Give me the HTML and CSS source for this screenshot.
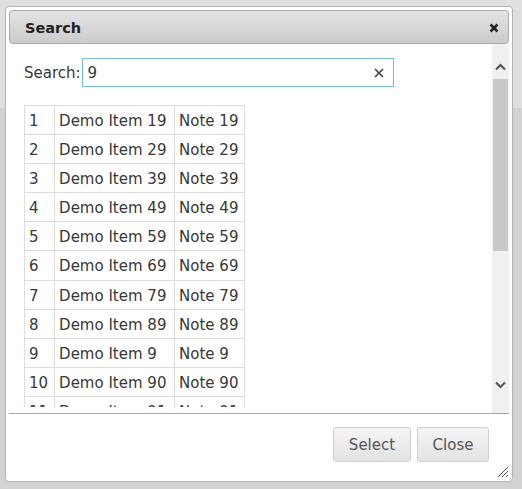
FILE: index.html
```html
<!DOCTYPE html>
<html>
<head>
<meta charset="utf-8">
<link rel="stylesheet" href="styles.css">
</head>
<body>
<div class="dialog">
  <div class="titlebar">
    <span class="title">Search</span>
    <svg class="title-close" width="10" height="10" viewBox="0 0 10 10"><path d="M1.5 1.5 L8.5 8.5 M8.5 1.5 L1.5 8.5" stroke="#222" stroke-width="2.6" stroke-linecap="butt"/></svg>
  </div>
  <div class="body">
    <div class="content">
      <div class="search-row">
        <label class="search-label">Search:</label>
        <div class="search-box">
          <input class="search-input" type="text" value="9">
          <svg class="clear" width="10" height="10" viewBox="0 0 10 10"><path d="M1 1 L9 9 M9 1 L1 9" stroke="#444" stroke-width="1.6"/></svg>
        </div>
      </div>
      <div class="table-wrap">
        <table class="grid">
          <tr><td class="c1">1</td><td class="c2">Demo Item 19</td><td class="c3">Note 19</td></tr>
          <tr><td class="c1">2</td><td class="c2">Demo Item 29</td><td class="c3">Note 29</td></tr>
          <tr><td class="c1">3</td><td class="c2">Demo Item 39</td><td class="c3">Note 39</td></tr>
          <tr><td class="c1">4</td><td class="c2">Demo Item 49</td><td class="c3">Note 49</td></tr>
          <tr><td class="c1">5</td><td class="c2">Demo Item 59</td><td class="c3">Note 59</td></tr>
          <tr><td class="c1">6</td><td class="c2">Demo Item 69</td><td class="c3">Note 69</td></tr>
          <tr><td class="c1">7</td><td class="c2">Demo Item 79</td><td class="c3">Note 79</td></tr>
          <tr><td class="c1">8</td><td class="c2">Demo Item 89</td><td class="c3">Note 89</td></tr>
          <tr><td class="c1">9</td><td class="c2">Demo Item 9</td><td class="c3">Note 9</td></tr>
          <tr><td class="c1">10</td><td class="c2">Demo Item 90</td><td class="c3">Note 90</td></tr>
          <tr><td class="c1">11</td><td class="c2">Demo Item 91</td><td class="c3">Note 91</td></tr>
        </table>
      </div>
    </div>
    <div class="scrollbar">
      <div class="sb-btn sb-up">
        <svg width="11" height="8" viewBox="0 0 11 8"><path d="M1 6.5 L5.5 2 L10 6.5" fill="none" stroke="#555" stroke-width="2.2"/></svg>
      </div>
      <div class="sb-track">
        <div class="sb-thumb"></div>
      </div>
      <div class="sb-btn sb-down">
        <svg width="11" height="8" viewBox="0 0 11 8"><path d="M1 1.5 L5.5 6 L10 1.5" fill="none" stroke="#555" stroke-width="2.2"/></svg>
      </div>
    </div>
  </div>
  <div class="buttonpane">
    <button class="btn btn-select">Select</button>
    <button class="btn btn-close">Close</button>
  </div>
  <svg class="grip" width="12" height="12" viewBox="0 0 12 12"><path d="M11 1 L1 11 M11 5 L5 11 M11 9 L9 11" stroke="#555" stroke-width="1"/></svg>
</div>
</body>
</html>
```
FILE: styles.css
```css
html, body {
  margin: 0;
  padding: 0;
}
body {
  width: 522px;
  height: 489px;
  box-sizing: border-box;
  padding: 6px 0 0 5px;
  background: linear-gradient(to bottom, #dfdfdf 0, #dfdfdf 108px, #d3d3d3 108px, #d3d3d3 100%);
  font-family: "DejaVu Sans", Verdana, sans-serif;
  font-size: 15px;
  color: #383838;
  overflow: hidden;
}
.dialog {
  position: relative;
  box-sizing: border-box;
  width: 508px;
  height: 476px;
  background: #fff;
  border: 1px solid #b4b4b4;
  border-radius: 4px;
  padding: 3px;
  display: flex;
  flex-direction: column;
}
.titlebar {
  box-sizing: border-box;
  height: 34px;
  flex: none;
  border: 1px solid #aaa;
  border-radius: 4px;
  background: linear-gradient(to bottom, #e4e4e4, #cbcbcb);
  display: flex;
  align-items: center;
  justify-content: space-between;
  padding: 2px 9px 0 15px;
}
.title {
  font-weight: bold;
  font-size: 14.5px;
  color: #222;
}
.title-close {
  display: block;
}
.body {
  height: 369px;
  flex: none;
  display: flex;
  overflow: hidden;
}
.content {
  flex: 1;
  padding: 14px 0 0 15px;
  min-width: 0;
}
.search-row {
  display: flex;
  align-items: center;
  height: 29px;
}
.search-label {
  margin-right: 1px;
}
.search-box {
  box-sizing: border-box;
  width: 312px;
  height: 29px;
  border: 1px solid #72bcd9;
  display: flex;
  align-items: center;
  padding: 0 9px 0 5px;
}
.search-input {
  flex: 1;
  border: none;
  outline: none;
  padding: 0;
  margin: 0;
  font-family: "DejaVu Sans", Verdana, sans-serif;
  font-size: 15px;
  color: #383838;
  background: transparent;
  min-width: 0;
}
.clear {
  display: block;
}
.table-wrap {
  margin-top: 18px;
  height: 302px;
  overflow: hidden;
}
.grid {
  border-collapse: collapse;
}
.grid td {
  border: 1px solid #ddd;
  padding: 6px 6px 4px 4px;
  line-height: 18.1px;
  white-space: nowrap;
}
.grid .c1 { width: 19px; }
.grid .c2 { width: 109px; }
.grid .c3 { width: 59px; }
.scrollbar {
  width: 17px;
  flex: none;
  background: #f0f0f0;
  display: flex;
  flex-direction: column;
}
.sb-btn {
  height: 35px;
  display: flex;
  justify-content: center;
  flex: none;
  box-sizing: border-box;
}
.sb-up {
  align-items: flex-end;
  padding-bottom: 8px;
}
.sb-down {
  align-items: flex-start;
  padding-top: 3px;
}
.sb-track {
  flex: 1;
  padding: 0 1px;
}
.sb-thumb {
  height: 172px;
  background: #c9c9c9;
}
.buttonpane {
  flex: 1;
  border-top: 1px solid #a9a9a9;
  display: flex;
  justify-content: flex-end;
  align-items: flex-start;
  padding: 13px 20px 0 0;
  gap: 6px;
}
.btn {
  box-sizing: border-box;
  height: 35px;
  border: 1px solid #cfcfcf;
  border-radius: 3px;
  background: linear-gradient(to bottom, #f5f5f5, #e3e3e3);
  font-family: "DejaVu Sans", Verdana, sans-serif;
  font-size: 15px;
  color: #555;
  padding: 1px 0 0 0;
  margin: 0;
}
.btn-select { width: 78px; }
.btn-close { width: 72px; }
.grip {
  position: absolute;
  right: 3px;
  bottom: 3px;
}
```
